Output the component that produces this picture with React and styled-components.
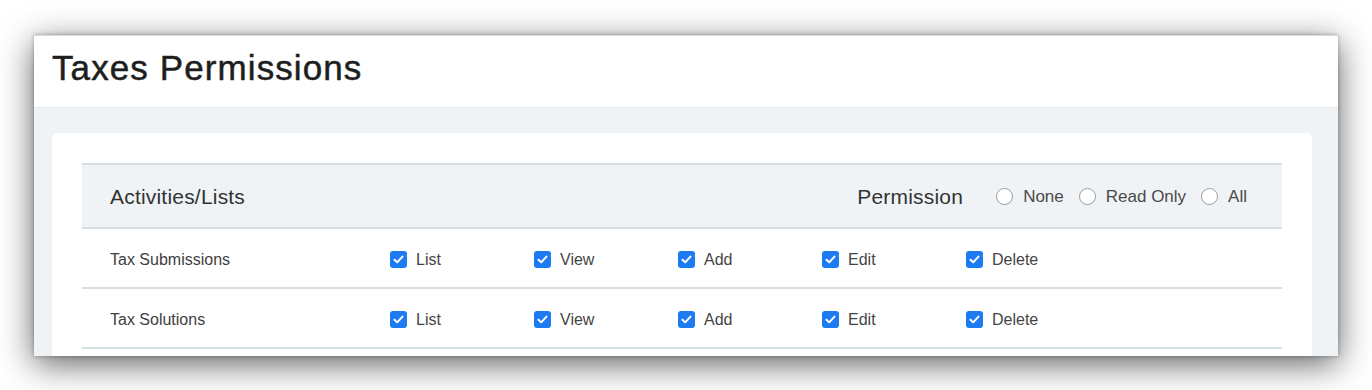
import styled, { createGlobalStyle } from "styled-components";

const GlobalStyle = createGlobalStyle`
  html, body {
    margin: 0;
    background: #fff;
    font-family: "Liberation Sans", Arial, sans-serif;
  }
`;

const rows = [
  { name: "Tax Submissions" },
  { name: "Tax Solutions" },
];
const actions = ["List", "View", "Add", "Edit", "Delete"];
const levels = ["None", "Read Only", "All"];

function Check() {
  return (
    <Box>
      <svg width="11" height="9" viewBox="0 0 11 9">
        <path
          d="M1.5 4.8 L4.2 7.4 L9.5 1.6"
          fill="none"
          stroke="#fff"
          strokeWidth="2"
          strokeLinecap="round"
          strokeLinejoin="round"
        />
      </svg>
    </Box>
  );
}

export default function App() {
  return (
    <Page>
      <GlobalStyle />
      <Window>
        <Header>
          <Title>Taxes Permissions</Title>
        </Header>
        <Body>
          <Card>
            <Table>
              <HeadRow>
                <HeadText>Activities/Lists</HeadText>
                <PermGroup>
                  <HeadText>Permission</HeadText>
                  <Radios>
                    {levels.map((l) => (
                      <RadioLabel key={l}>
                        <Circle />
                        {l}
                      </RadioLabel>
                    ))}
                  </Radios>
                </PermGroup>
              </HeadRow>
              {rows.map((r) => (
                <Row key={r.name}>
                  <RowName>{r.name}</RowName>
                  {actions.map((a) => (
                    <Cell key={a}>
                      <Check />
                      {a}
                    </Cell>
                  ))}
                </Row>
              ))}
            </Table>
          </Card>
        </Body>
      </Window>
    </Page>
  );
}

const Page = styled.div`
  padding: 35px 34px;
`;

const Window = styled.div`
  width: 1304px;
  height: 321px;
  overflow: hidden;
  background: #f0f3f5;
  border-top: 1px solid #d9dcde;
  box-sizing: border-box;
  box-shadow: 0 8px 32px rgba(0, 0, 0, 0.62), 0 0 4px rgba(0, 0, 0, 0.3);
`;

const Header = styled.div`
  height: 72px;
  box-sizing: border-box;
  padding: 14px 0 0 18px;
  background: #fff;
  border-bottom: 1px solid #e2e9eb;
`;

const Title = styled.h1`
  margin: 0;
  font-size: 35px;
  line-height: 1;
  font-weight: 400;
  letter-spacing: 1.1px;
  color: #1e1e1e;
  -webkit-text-stroke: 0.5px #1e1e1e;
`;

const Body = styled.div`
  padding: 25px 26px 0 18px;
`;

const Card = styled.div`
  background: #fff;
  border-radius: 5px;
  padding: 30px 30px 40px;
`;

const Table = styled.div`
  border-top: 2px solid #d5dee3;
`;

const HeadRow = styled.div`
  height: 64px;
  box-sizing: border-box;
  display: flex;
  align-items: center;
  justify-content: space-between;
  padding: 1px 35px 0 28px;
  background: #f0f3f5;
  border-bottom: 2px solid #d5dee3;
`;

const HeadText = styled.span`
  font-size: 21px;
  color: #333;
  letter-spacing: 0.2px;
`;

const PermGroup = styled.div`
  display: flex;
  align-items: center;
  gap: 33px;
`;

const Radios = styled.div`
  display: flex;
  align-items: center;
  gap: 15px;
`;

const RadioLabel = styled.label`
  display: flex;
  align-items: center;
  gap: 10px;
  font-size: 17px;
  color: #4a4a4a;
`;

const Circle = styled.span`
  width: 15px;
  height: 15px;
  border-radius: 50%;
  border: 1px solid #9a9a9a;
  background: #fff;
`;

const Row = styled.div`
  height: 60px;
  box-sizing: border-box;
  display: flex;
  align-items: center;
  padding: 3px 0 0 28px;
  border-bottom: 2px solid #d5dee3;
`;

const RowName = styled.span`
  width: 280px;
  font-size: 16px;
  color: #404040;
`;

const Cell = styled.label`
  width: 144px;
  display: flex;
  align-items: center;
  gap: 9px;
  font-size: 16px;
  color: #454545;
`;

const Box = styled.span`
  width: 17px;
  height: 17px;
  border-radius: 3px;
  background: #1d7bf2;
  display: flex;
  align-items: center;
  justify-content: center;
`;
